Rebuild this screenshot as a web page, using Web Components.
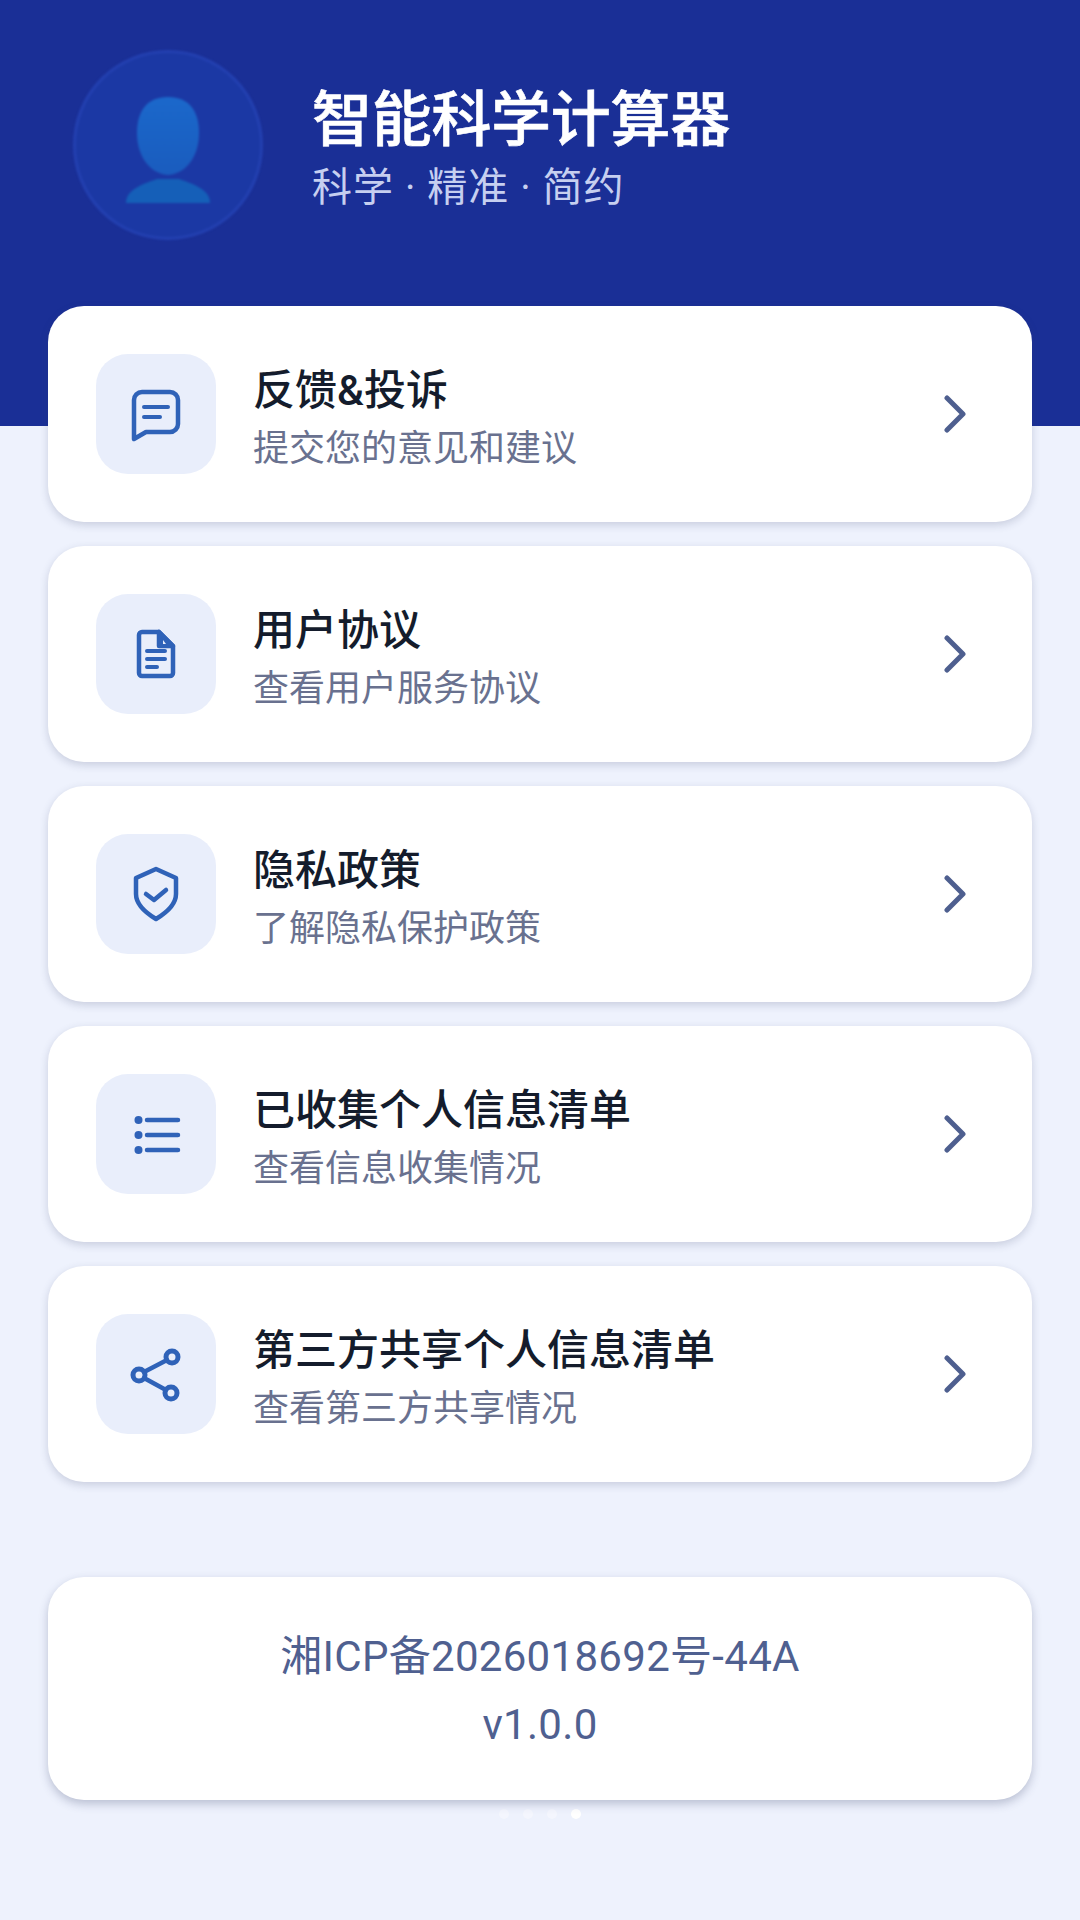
<!DOCTYPE html>
<html lang="zh">
<head>
<meta charset="utf-8">
<title>智能科学计算器</title>
<style>
  html, body { margin: 0; padding: 0; background: #eef2fd; }
  body { font-family: Roboto, "Noto Sans CJK SC", sans-serif; }
</style>
</head>
<body>
<calc-about>
  <app-header title-text="智能科学计算器" sub-text="科学 · 精准 · 简约"></app-header>
  <menu-list>
    <menu-card icon="message" title-text="反馈&amp;投诉" sub-text="提交您的意见和建议"></menu-card>
    <menu-card icon="doc" title-text="用户协议" sub-text="查看用户服务协议"></menu-card>
    <menu-card icon="shield" title-text="隐私政策" sub-text="了解隐私保护政策"></menu-card>
    <menu-card icon="list" title-text="已收集个人信息清单" sub-text="查看信息收集情况"></menu-card>
    <menu-card icon="share" title-text="第三方共享个人信息清单" sub-text="查看第三方共享情况"></menu-card>
  </menu-list>
  <info-card>
    <span>湘ICP备2026018692号-44A</span>
    <span>v1.0.0</span>
  </info-card>
  <page-dots count="4" active="3"></page-dots>
</calc-about>

<script>
const ICONS = {
  message: `
    <path d="M46 38H74a8 8 0 0 1 8 8V70a8 8 0 0 1-8 8H50L38 85V46a8 8 0 0 1 8-8Z"/>
    <path d="M48 53H72M48 63H64" stroke-width="4"/>`,
  doc: `
    <path d="M46 38H63L77 52V79a3 3 0 0 1-3 3H46a3 3 0 0 1-3-3V41a3 3 0 0 1 3-3Z"/>
    <path d="M63 38V52H77Z" fill="#2f62b8"/>
    <path d="M67 46L70 50H67Z" fill="#e9eefb" stroke="none"/>
    <path d="M51 57H69M51 65H69M51 73H61" stroke-width="4"/>`,
  shield: `
    <path d="M60 35L80 44V60C80 71 70 79 60 85C50 79 40 71 40 60V44Z"/>
    <path d="M50 60L58 66L70 56" stroke-width="4.5"/>`,
  list: `
    <path d="M51 46H82M51 61H82M51 76H82"/>
    <circle cx="42.5" cy="46" r="4" fill="#2f62b8" stroke="none"/>
    <circle cx="42.5" cy="61" r="4" fill="#2f62b8" stroke="none"/>
    <circle cx="42.5" cy="76" r="4" fill="#2f62b8" stroke="none"/>`,
  share: `
    <path d="M48 58L71 46M48 64L70 76"/>
    <circle cx="76" cy="43" r="6" stroke-width="5"/>
    <circle cx="43" cy="61" r="6" stroke-width="5"/>
    <circle cx="75" cy="79" r="6" stroke-width="5"/>`
};

class CalcAbout extends HTMLElement {
  constructor() {
    super();
    this.attachShadow({ mode: 'open' });
    this.shadowRoot.innerHTML = `
      <style>
        :host { display: block; width: 1080px; height: 1920px; background: #eef2fd; overflow: hidden; }
      </style>
      <slot></slot>
    `;
  }
}

class AppHeader extends HTMLElement {
  constructor() {
    super();
    this.attachShadow({ mode: 'open' });
    this.shadowRoot.innerHTML = `
      <style>
        :host { display: block; height: 426px; background: #1a2f96; box-sizing: border-box; padding: 50px 0 0 73px; }
        .row { display: flex; align-items: flex-start; gap: 49px; }
        .avatar { flex: none; width: 190px; height: 190px; border-radius: 50%; box-sizing: border-box;
          background: #1b38a4; border: 3px solid #2340b0; display: flex; align-items: center; justify-content: center;
          padding-top: 14px; filter: blur(1px); }
        svg { display: block; }
        .text { color: #fff; padding-top: 31px; }
        h1 { margin: 0; font: 500 60px/79px Roboto, "Noto Sans CJK SC", sans-serif; letter-spacing: -.3px; -webkit-text-stroke: .6px #fff; }
        p { margin: 0; font: 400 40px/56px Roboto, "Noto Sans CJK SC", sans-serif; color: #c6cff0; letter-spacing: 1px; }
      </style>
      <div class="row">
        <div class="avatar">
          <svg width="90" height="110" viewBox="0 0 90 110">
            <defs>
              <linearGradient id="head" x1="0" y1="0" x2="0" y2="1">
                <stop offset="0" stop-color="#1b68cb"/>
                <stop offset="1" stop-color="#1a5cbe"/>
              </linearGradient>
            </defs>
            <path fill="url(#head)" d="M45 0C66 0 76 14 76 36C76 56 66 76 45 78C24 76 14 56 14 36C14 14 24 0 45 0Z"/>
            <path fill="#155fb8" d="M3 106C3 94 16 88 34 82H56C74 88 87 94 87 106Z"/>
          </svg>
        </div>
        <div class="text">
          <h1>${this.getAttribute('title-text')}</h1>
          <p>${this.getAttribute('sub-text')}</p>
        </div>
      </div>
    `;
  }
}

class MenuList extends HTMLElement {
  constructor() {
    super();
    this.attachShadow({ mode: 'open' });
    this.shadowRoot.innerHTML = `
      <style>
        :host { display: flex; flex-direction: column; gap: 24px; margin: -120px 48px 0; position: relative; }
      </style>
      <slot></slot>
    `;
  }
}

class MenuCard extends HTMLElement {
  constructor() {
    super();
    this.attachShadow({ mode: 'open' });
    this.shadowRoot.innerHTML = `
      <style>
        :host { display: flex; align-items: center; height: 216px; box-sizing: border-box; padding: 0 66px 0 48px;
          background: #fff; border-radius: 36px; box-shadow: 0 3px 8px rgba(50, 60, 100, .2); }
        .icon { flex: none; width: 120px; height: 120px; border-radius: 32px; background: #e9eefb; }
        .icon svg { display: block; fill: none; stroke: #2f62b8; stroke-width: 4.5; stroke-linecap: round; stroke-linejoin: round; }
        .text { flex: 1; margin-left: 37px; padding-top: 11px; }
        .title { font: 500 42px/58px Roboto, "Noto Sans CJK SC", sans-serif; color: #141c2c; }
        .sub { font: 400 36px/58px Roboto, "Noto Sans CJK SC", sans-serif; color: #69718f; }
        .chev { flex: none; display: block; fill: none; stroke: #4e5f8f; stroke-width: 5; stroke-linecap: round; stroke-linejoin: round; }
      </style>
      <div class="icon">
        <svg width="120" height="120" viewBox="0 0 120 120">${ICONS[this.getAttribute('icon')]}</svg>
      </div>
      <div class="text">
        <div class="title">${this.getAttribute('title-text')}</div>
        <div class="sub">${this.getAttribute('sub-text')}</div>
      </div>
      <svg class="chev" width="22" height="38" viewBox="0 0 22 38"><path d="M3 3L19 19L3 35"/></svg>
    `;
  }
}

class InfoCard extends HTMLElement {
  constructor() {
    super();
    this.attachShadow({ mode: 'open' });
    this.shadowRoot.innerHTML = `
      <style>
        :host { display: flex; flex-direction: column; align-items: center; justify-content: center; height: 223px; margin: 95px 48px 0;
          box-sizing: border-box; padding-top: 5px;
          background: #fff; border-radius: 36px; box-shadow: 0 4px 10px rgba(50, 60, 100, .28);
          font: 400 42px/68px Roboto, "Noto Sans CJK SC", sans-serif; letter-spacing: .3px; color: #4f6090; position: relative; }
        ::slotted(span) { display: block; }
      </style>
      <slot></slot>
    `;
  }
}

class PageDots extends HTMLElement {
  constructor() {
    super();
    this.attachShadow({ mode: 'open' });
    const count = Number(this.getAttribute('count'));
    const active = Number(this.getAttribute('active'));
    const dots = [...Array(count)].map((_, i) => `<i class="${i === active ? 'on' : ''}"></i>`).join('');
    this.shadowRoot.innerHTML = `
      <style>
        :host { display: flex; justify-content: center; gap: 14px; margin-top: 9px; }
        i { display: block; width: 10px; height: 10px; border-radius: 50%; background: rgba(255, 255, 255, .35); }
        i.on { background: #fff; }
      </style>
      ${dots}
    `;
  }
}

customElements.define('calc-about', CalcAbout);
customElements.define('app-header', AppHeader);
customElements.define('menu-list', MenuList);
customElements.define('menu-card', MenuCard);
customElements.define('info-card', InfoCard);
customElements.define('page-dots', PageDots);
</script>
</body>
</html>
